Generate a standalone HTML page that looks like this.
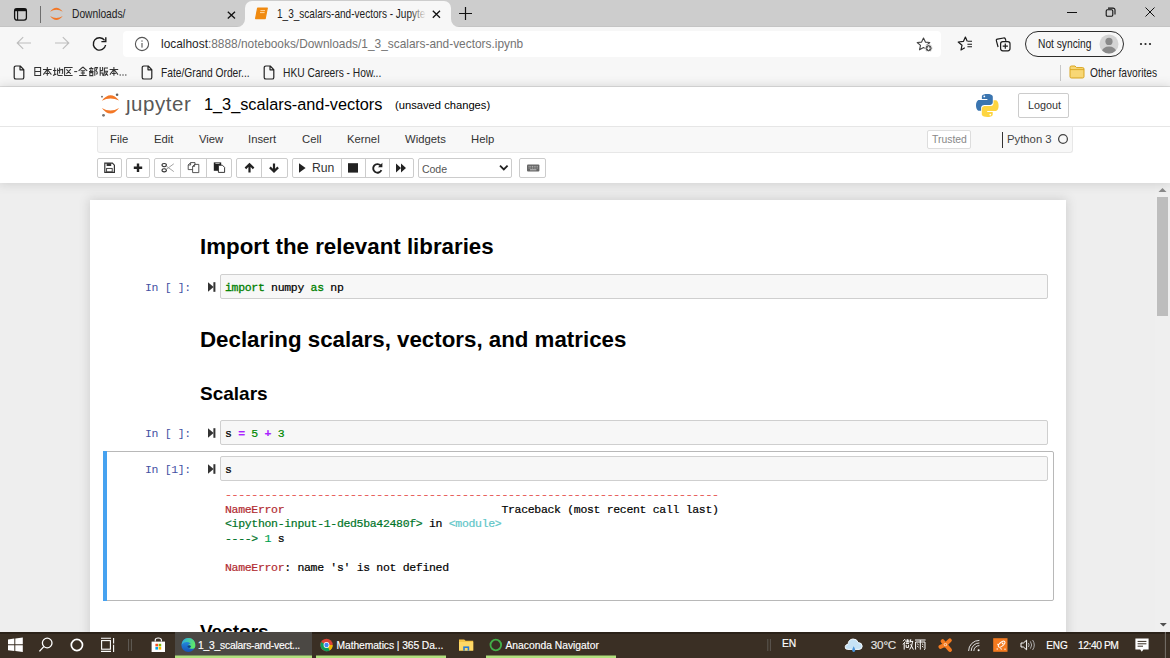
<!DOCTYPE html>
<html><head><meta charset="utf-8">
<style>
*{box-sizing:border-box;margin:0;padding:0}
html,body{width:1170px;height:658px;overflow:hidden;background:#eeeeee;font-family:"Liberation Sans",sans-serif;position:relative}
.a{position:absolute}
svg.a{overflow:visible}
.mono{font-family:"Liberation Mono",monospace}
.seg{font-size:12.4px;color:#1b1b1b;white-space:nowrap;transform:scaleX(0.825);transform-origin:0 0;line-height:14px}
.menu{top:132px;font-size:11.3px;color:#333;line-height:14px}
.btn{top:158px;height:20px;background:#fff;border:1px solid #ccc;border-radius:2px}
.dv{top:159px;width:1px;height:18px;background:#ccc}
h1.a{font-size:22.3px;font-weight:bold;color:#000;line-height:26px}
h2.a{font-size:19px;font-weight:bold;color:#000;line-height:22px}
.prompt{font-size:11.5px;letter-spacing:-0.35px;color:#4351a3;white-space:pre;line-height:14px}
.inbox{left:220px;width:828px;height:25px;background:#f7f7f7;border:1px solid #cfcfcf;border-radius:2px}
.code{-webkit-text-stroke:0.2px currentColor;font-size:11.5px;letter-spacing:-0.32px;color:#000;white-space:pre;line-height:14px}
.kw{color:#008000;-webkit-text-stroke:0.3px currentColor}
.op{color:#aa22ff;font-weight:bold}
.num{color:#008800}
.out{-webkit-text-stroke:0.2px currentColor;font-size:11.5px;letter-spacing:-0.32px;white-space:pre;line-height:14.5px;color:#000}
.r1{color:#e75c58}.r2{color:#b22b31}.g2{color:#007427}.g1{color:#00a250}.cy{color:#60c6c8}
.tb{-webkit-text-stroke:0.15px currentColor;font-size:10.3px;color:#fff;white-space:nowrap;line-height:12px}
.cjk path{fill:none;stroke-linecap:butt}
</style></head><body>

<!-- ============ TAB STRIP ============ -->
<div class="a" style="left:0;top:0;width:1170px;height:27px;background:#cdcdcd"></div>
<div class="a" style="left:0;top:27px;width:1170px;height:60px;background:#f7f7f7"></div>
<div class="a" style="left:0;top:26px;width:1170px;height:1px;background:#c4c4c4"></div>
<div class="a" style="left:245px;top:1px;width:206px;height:27px;background:#f7f7f7;border-radius:7px 7px 0 0"></div>
<svg class="a" style="left:237px;top:19px" width="8" height="8"><path d="M8 0 V8 H0 A8 8 0 0 0 8 0Z" fill="#f7f7f7"/></svg>
<svg class="a" style="left:451px;top:19px" width="8" height="8"><path d="M0 0 V8 H8 A8 8 0 0 1 0 0Z" fill="#f7f7f7"/></svg>
<svg class="a" style="left:13px;top:7px" width="15" height="15" viewBox="0 0 15 15"><rect x="1.6" y="1.6" width="11.8" height="11.6" rx="2.4" fill="none" stroke="#111" stroke-width="1.3"/><rect x="1.6" y="1.6" width="11.8" height="2.6" fill="#111"/><line x1="4.6" y1="3" x2="4.6" y2="13" stroke="#111" stroke-width="1.1"/></svg>
<div class="a" style="left:40px;top:6px;width:1px;height:17px;background:#6e6e6e"></div>
<svg class="a" style="left:49px;top:6px" width="15" height="16" viewBox="0 0 15 16"><path d="M1 5.8 Q7.3 -2.2 13.8 5.8 Q7.3 1.6 1 5.8Z" fill="#f37726"/><path d="M1 10 Q7.3 18 13.8 10 Q7.3 14.2 1 10Z" fill="#f37726"/></svg>
<div class="a seg" style="left:72px;top:7px;color:#222">Downloads/</div>
<svg class="a" style="left:227px;top:11px" width="9" height="8"><path d="M0.8 0.8 L8 7.4 M8 0.8 L0.8 7.4" stroke="#111" stroke-width="1.3"/></svg>
<svg class="a" style="left:254px;top:7px" width="15" height="13" viewBox="0 0 15 13"><path d="M3.6 1 H13.3 L11.2 11.6 H1.6Z" fill="#f08a10" stroke="#f08a10" stroke-width="1.2" stroke-linejoin="round"/><path d="M6.4 3.6 H11 M6 5.6 H10.6" stroke="#ffd7a0" stroke-width="1"/></svg>
<div class="a" style="left:277px;top:7px;width:160px;height:16px;overflow:hidden"><div class="seg" style="position:absolute;left:0;top:0;transform:scaleX(0.81)">1_3_scalars-and-vectors - Jupyter</div><div style="position:absolute;left:133px;top:0;width:27px;height:16px;background:linear-gradient(to right,rgba(247,247,247,0),#f7f7f7 60%)"></div></div>
<svg class="a" style="left:432px;top:10px" width="9" height="9"><path d="M0.8 0.8 L8 7.8 M8 0.8 L0.8 7.8" stroke="#111" stroke-width="1.3"/></svg>
<svg class="a" style="left:459px;top:7px" width="13" height="13"><path d="M6.5 0 V13 M0 6.5 H13" stroke="#111" stroke-width="1.2"/></svg>
<div class="a" style="left:1067px;top:12px;width:10px;height:1px;background:#111"></div>
<svg class="a" style="left:1105px;top:7px" width="11" height="10" viewBox="0 0 11 10"><rect x="1.2" y="2.7" width="6.6" height="6.6" rx="1.2" fill="none" stroke="#111" stroke-width="1.1"/><path d="M3 1.1 H8 A2 2 0 0 1 10 3.1 V7.6" fill="none" stroke="#111" stroke-width="1.1"/></svg>
<svg class="a" style="left:1145px;top:7px" width="10" height="10"><path d="M0.5 0.5 L9.5 9.5 M9.5 0.5 L0.5 9.5" stroke="#111" stroke-width="1"/></svg>

<!-- ============ TOOLBAR ============ -->
<svg class="a" style="left:16px;top:36px" width="16" height="14" viewBox="0 0 16 14"><path d="M15 7 H1.5 M7.2 1.2 L1.2 7 L7.2 12.8" fill="none" stroke="#bdbdbd" stroke-width="1.1"/></svg>
<svg class="a" style="left:54px;top:36px" width="16" height="14" viewBox="0 0 16 14"><path d="M1 7 H14.5 M8.8 1.2 L14.8 7 L8.8 12.8" fill="none" stroke="#bdbdbd" stroke-width="1.1"/></svg>
<svg class="a" style="left:91px;top:36px" width="17" height="16" viewBox="0 0 17 16"><path d="M13.6 4.4 A6.2 6.2 0 1 0 14.6 9" fill="none" stroke="#1b1b1b" stroke-width="1.4"/><path d="M14.8 1.2 V5.6 H10.4" fill="none" stroke="#1b1b1b" stroke-width="1.4"/></svg>
<div class="a" style="left:123px;top:31px;width:818px;height:26px;background:#fff;border-radius:4px"></div>
<svg class="a" style="left:134px;top:36px" width="16" height="16" viewBox="0 0 16 16"><circle cx="8" cy="8" r="6.6" fill="none" stroke="#555" stroke-width="1.1"/><rect x="7.45" y="7" width="1.1" height="4.6" fill="#555"/><rect x="7.45" y="4.4" width="1.1" height="1.3" fill="#555"/></svg>
<div class="a" style="left:161px;top:37px;font-size:11.9px;color:#1f1f1f;white-space:nowrap;line-height:14px">localhost<span style="color:#737373">:8888/notebooks/Downloads/1_3_scalars-and-vectors.ipynb</span></div>
<svg class="a" style="left:916px;top:37px" width="17" height="15" viewBox="0 0 17 15"><path d="M7.5 1 L9.4 5.1 L13.8 5.5 L10.5 8.4 L11.5 12.8 L7.5 10.5 L3.5 12.8 L4.5 8.4 L1.2 5.5 L5.6 5.1Z" fill="none" stroke="#444" stroke-width="1.1" stroke-linejoin="round"/><circle cx="12.6" cy="11.2" r="3.6" fill="#555" stroke="#fff" stroke-width="0.9"/><path d="M12.6 9.4 V13 M10.8 11.2 H14.4" stroke="#fff" stroke-width="1"/></svg>
<svg class="a" style="left:957px;top:36px" width="17" height="15" viewBox="0 0 17 15"><path d="M10.2 5.3 L8.4 1.1 L6.5 5.3 L1.2 6 L5 9.2 L4 14 L7.8 11.8" fill="none" stroke="#1b1b1b" stroke-width="1.2" stroke-linejoin="round"/><path d="M10.4 5.3 H15 M10.4 8.3 H15 M10.4 10.8 H15" stroke="#1b1b1b" stroke-width="1.1"/></svg>
<svg class="a" style="left:995px;top:36px" width="17" height="16" viewBox="0 0 17 16"><path d="M3.1 11 L1.4 4.8 Q1 3.4 2.4 3.1 L8.6 2 Q9.9 1.8 10.4 3 L10.9 4.8" fill="none" stroke="#1b1b1b" stroke-width="1.2"/><rect x="5.6" y="5.6" width="9.4" height="9.2" rx="2.2" fill="#f7f7f7" stroke="#1b1b1b" stroke-width="1.2"/><path d="M10.3 7.6 V12.8 M7.7 10.2 H12.9" stroke="#1b1b1b" stroke-width="1.2"/></svg>
<div class="a" style="left:1025px;top:31px;width:99px;height:26px;border:1.2px solid #2b2b2b;border-radius:13px"></div>
<div class="a seg" style="left:1038px;top:37px;color:#222">Not syncing</div>
<svg class="a" style="left:1099px;top:34px" width="20" height="20" viewBox="0 0 20 20"><circle cx="10" cy="10" r="9.5" fill="#d4d4d4"/><clipPath id="cp1"><circle cx="10" cy="10" r="9.5"/></clipPath><g clip-path="url(#cp1)" fill="#8a8a8a"><circle cx="10" cy="7.4" r="3.6"/><ellipse cx="10" cy="17.6" rx="7" ry="5"/></g></svg>
<svg class="a" style="left:1139px;top:42px" width="13" height="4"><circle cx="2" cy="2" r="1.1" fill="#222"/><circle cx="6.5" cy="2" r="1.1" fill="#222"/><circle cx="11" cy="2" r="1.1" fill="#222"/></svg>

<!-- ============ BOOKMARKS ============ -->
<div class="a" style="left:0;top:86px;width:1170px;height:1px;background:#dedede"></div>
<svg class="a" style="left:13px;top:65px" width="12" height="15" viewBox="0 0 12 15"><path d="M1.2 2.6 A1.6 1.6 0 0 1 2.8 1 H7.2 L10.8 4.6 V12.4 A1.6 1.6 0 0 1 9.2 14 H2.8 A1.6 1.6 0 0 1 1.2 12.4Z M7 1 V4.8 H10.8" fill="none" stroke="#222" stroke-width="1.2" stroke-linejoin="round"/></svg>
<svg class="a cjk" style="left:34px;top:67px" width="95" height="9" viewBox="0 0 95 9"><g stroke="#333" stroke-width="1.05">
<path d="M0.8 0.5 H6.6 V8.5 H0.8Z M0.8 4.5 H6.6"/>
<path transform="translate(9 0)" d="M0 2.4 H8.6 M4.3 0 V8.8 M4.3 2.4 L0.3 7.6 M4.3 2.4 L8.4 7.6 M2.4 6.4 H6.2"/>
<path transform="translate(19 0)" d="M0 3.4 H3.4 M1.7 0.6 V7.6 L0 8.4 L3.4 7 M4.2 3.6 L9.6 2.4 V6.2 L8.8 6.6 M6.6 0.4 V6.6 M4.6 1.4 V7.6 Q4.6 8.5 5.5 8.5 H9.6"/>
<path transform="translate(30 0)" d="M8.6 0.5 H0.6 V8.5 H8.6 M2.4 2.4 L6.8 6.8 M6.8 2.2 L2.4 6.8"/>
<path transform="translate(40 0)" d="M0.2 4.6 H3.2"/>
<path transform="translate(44.6 0)" d="M4.3 0 L0 3.8 M4.3 0 L8.6 3.8 M2 3.8 H6.6 M2.2 6 H6.4 M0.6 8.5 H8 M4.3 3.8 V8.5"/>
<path transform="translate(55 0)" d="M2.2 0 V1.2 M0.2 1.6 H4.4 M1.2 2.6 L1.8 4 M3.4 2.6 L2.8 4 M0 4.4 H4.6 M0.8 5.6 H3.8 V8.6 H0.8Z M5.8 0.4 V8.8 M5.8 0.6 H8.4 L7 3.6 Q8.8 5 8.2 6.6 Q7.8 7.2 7 7"/>
<path transform="translate(65 0)" d="M1.2 0 V8.8 M1.2 3.6 H3.8 M3.6 0 V3.6 M1.2 6 H3.8 V8.8 M5 1 H9 M5.4 1 V5 Q5.4 7.6 4.4 8.8 M5.4 4.2 H8.6 Q8 7 5.6 8.8 M6.4 5.4 L9 8.6"/>
<path transform="translate(75.6 0)" d="M0 2.4 H8.6 M4.3 0 V8.8 M4.3 2.4 L0.3 7.6 M4.3 2.4 L8.4 7.6 M2.4 6.4 H6.2"/>
</g><g fill="#333"><rect x="85.6" y="7.4" width="1.2" height="1.2"/><rect x="88.4" y="7.4" width="1.2" height="1.2"/><rect x="91.2" y="7.4" width="1.2" height="1.2"/></g></svg>
<svg class="a" style="left:141px;top:65px" width="12" height="15" viewBox="0 0 12 15"><path d="M1.2 2.6 A1.6 1.6 0 0 1 2.8 1 H7.2 L10.8 4.6 V12.4 A1.6 1.6 0 0 1 9.2 14 H2.8 A1.6 1.6 0 0 1 1.2 12.4Z M7 1 V4.8 H10.8" fill="none" stroke="#222" stroke-width="1.2" stroke-linejoin="round"/></svg>
<div class="a seg" style="left:161px;top:66px;color:#222">Fate/Grand Order...</div>
<svg class="a" style="left:263px;top:65px" width="12" height="15" viewBox="0 0 12 15"><path d="M1.2 2.6 A1.6 1.6 0 0 1 2.8 1 H7.2 L10.8 4.6 V12.4 A1.6 1.6 0 0 1 9.2 14 H2.8 A1.6 1.6 0 0 1 1.2 12.4Z M7 1 V4.8 H10.8" fill="none" stroke="#222" stroke-width="1.2" stroke-linejoin="round"/></svg>
<div class="a seg" style="left:283px;top:66px;color:#222">HKU Careers - How...</div>
<div class="a" style="left:1060px;top:65px;width:1px;height:16px;background:#c8c8c8"></div>
<svg class="a" style="left:1069px;top:65px" width="16" height="14" viewBox="0 0 16 14"><path d="M1 2.4 A1.4 1.4 0 0 1 2.4 1 H6 L7.6 2.6 H13.6 A1.4 1.4 0 0 1 15 4 V11.6 A1.4 1.4 0 0 1 13.6 13 H2.4 A1.4 1.4 0 0 1 1 11.6Z" fill="#f8d775" stroke="#d9a520" stroke-width="1"/><path d="M1 4.6 H15" stroke="#d9a520" stroke-width="0.9"/></svg>
<div class="a seg" style="left:1090px;top:66px;color:#222">Other favorites</div>

<!-- ============ NOTEBOOK ============ -->
<div class="a" style="left:1155px;top:183px;width:15px;height:449px;background:#efefef"></div>
<svg class="a" style="left:1158px;top:187px" width="9" height="6"><path d="M0.5 5 L4.5 1 L8.5 5Z" fill="#8a8a8a"/></svg>
<div class="a" style="left:1157px;top:197px;width:11px;height:119px;background:#bdbdbd"></div>
<svg class="a" style="left:1158.5px;top:621.5px" width="9" height="6"><path d="M0.8 1 L4.3 4.6 L7.8 1Z" fill="#505050"/></svg>
<div class="a" style="left:90px;top:200px;width:976px;height:460px;background:#fff;box-shadow:0 0 10px 1px rgba(87,87,87,0.2)"></div>

<!-- ============ JUPYTER HEADER ============ -->
<div class="a" style="left:0;top:87px;width:1170px;height:96px;background:#fff;box-shadow:0 0 10px 1px rgba(87,87,87,0.2)"></div>
<svg class="a" style="left:100px;top:93px" width="22" height="25" viewBox="0 0 22 25"><path d="M1.8 7.8 Q10.4 -3.1 19.1 7.6 Q10.4 3.1 1.8 7.8Z" fill="#f37726"/><path d="M1.8 15 Q10.4 26.2 19.1 15 Q10.4 20.2 1.8 15Z" fill="#f37726"/><circle cx="17.1" cy="1.8" r="1.3" fill="#616262"/><circle cx="2" cy="3.7" r="0.9" fill="#616262"/><circle cx="3.5" cy="22.3" r="1.4" fill="#757575"/></svg>
<div class="a" style="left:126px;top:91.5px;font-size:20.5px;color:#585858;line-height:24px;letter-spacing:0.55px">ȷupyter</div>
<div class="a" style="left:204px;top:95px;font-size:16.3px;color:#000;line-height:19px">1_3_scalars-and-vectors</div>
<div class="a" style="left:395px;top:98.3px;font-size:11.2px;color:#000;line-height:14px">(unsaved changes)</div>
<svg class="a" style="left:975px;top:93px" width="25" height="25" viewBox="0 0 25 25"><path d="M12.2 1 C6.5 1 6.9 3.5 6.9 3.5 V6.1 H12.4 V6.9 H4.7 C4.7 6.9 1 6.5 1 12.3 C1 18 4.2 17.8 4.2 17.8 H6.1 V15.1 C6.1 15.1 6 11.9 9.3 11.9 H14.7 C14.7 11.9 17.8 12 17.8 8.9 V3.9 C17.8 3.9 18.3 1 12.2 1Z" fill="#3a75b0"/><path d="M12.4 24 C18.1 24 17.7 21.5 17.7 21.5 V18.9 H12.2 V18.1 H19.9 C19.9 18.1 23.6 18.5 23.6 12.7 C23.6 7 20.4 7.2 20.4 7.2 H18.5 V9.9 C18.5 9.9 18.6 13.1 15.3 13.1 H9.9 C9.9 13.1 6.8 13 6.8 16.1 V21.1 C6.8 21.1 6.3 24 12.4 24Z" fill="#fdd541"/><circle cx="9.3" cy="3.4" r="0.9" fill="#fff"/><circle cx="15.3" cy="21.6" r="0.9" fill="#fff"/></svg>
<div class="a" style="left:1018px;top:93px;width:51px;height:25px;border:1px solid #ccc;border-radius:2px;background:#fff"></div>
<div class="a" style="left:1028px;top:98px;font-size:10.8px;color:#333;line-height:14px">Logout</div>

<div class="a" style="left:0;top:126px;width:1170px;height:1px;background:#e6e6e6"></div>
<div class="a" style="left:97px;top:127px;width:976px;height:26px;background:#f8f8f8;border:1px solid #e7e7e7;border-top:none;border-radius:0 0 3px 3px"></div>
<div class="a menu" style="left:110px">File</div>
<div class="a menu" style="left:154px">Edit</div>
<div class="a menu" style="left:199px">View</div>
<div class="a menu" style="left:248px">Insert</div>
<div class="a menu" style="left:302px">Cell</div>
<div class="a menu" style="left:347px">Kernel</div>
<div class="a menu" style="left:405px">Widgets</div>
<div class="a menu" style="left:471px">Help</div>
<div class="a" style="left:927px;top:130px;width:44px;height:19px;border:1px solid #ddd;background:#fff;border-radius:2px"></div>
<div class="a" style="left:932px;top:133px;font-size:10.4px;color:#888;line-height:14px">Trusted</div>
<div class="a" style="left:1002px;top:132px;width:1px;height:15.5px;background:#333"></div>
<div class="a" style="left:1007px;top:132px;font-size:11.3px;color:#444;line-height:14px">Python 3</div>
<svg class="a" style="left:1057px;top:133px" width="12" height="12"><circle cx="6" cy="6" r="4.4" fill="none" stroke="#444" stroke-width="1.25"/></svg>

<div class="a btn" style="left:97px;width:25px"></div>
<div class="a btn" style="left:126px;width:24px"></div>
<div class="a btn" style="left:154px;width:78px"></div>
<div class="a dv" style="left:180px"></div><div class="a dv" style="left:206px"></div>
<div class="a btn" style="left:236px;width:52px"></div>
<div class="a dv" style="left:261px"></div>
<div class="a btn" style="left:292px;width:122px"></div>
<div class="a dv" style="left:341px"></div><div class="a dv" style="left:365px"></div><div class="a dv" style="left:389px"></div>
<div class="a btn" style="left:418px;width:94px"></div>
<div class="a btn" style="left:519px;width:27px"></div>
<svg class="a" style="left:0;top:0" width="1170" height="658">
 <!-- save -->
 <path d="M104.8 163.2 H112.4 L114.4 165.2 V172.4 H104.8Z" fill="none" stroke="#333" stroke-width="1.2"/>
 <rect x="106.6" y="163.2" width="4.6" height="2.8" fill="#333"/>
 <rect x="106.6" y="168.4" width="5.6" height="3.4" fill="#fff" stroke="#333" stroke-width="0.9"/>
 <!-- plus -->
 <path d="M138 163.6 V172 M133.8 167.8 H142.2" stroke="#222" stroke-width="2.4"/>
 <!-- scissors -->
 <ellipse cx="164.2" cy="165.1" rx="2.2" ry="1.6" fill="none" stroke="#333" stroke-width="1.1"/>
 <ellipse cx="164.2" cy="170.3" rx="2.2" ry="1.6" fill="none" stroke="#333" stroke-width="1.1"/>
 <path d="M166.2 166 L173.8 171.6 M166.2 169.4 L173.8 163.8" stroke="#999" stroke-width="0.9"/>
 <!-- copy -->
 <path d="M190.6 162.6 H195 V169.6 H188.2 V165Z M190.6 162.6 V165 H188.2" fill="#fff" stroke="#444" stroke-width="0.9"/>
 <path d="M194.6 164.4 H198.8 V172.6 H192.6 V166.4Z M194.6 164.4 V166.4 H192.6" fill="#fff" stroke="#444" stroke-width="0.9"/>
 <!-- paste -->
 <rect x="213.8" y="162.4" width="7.4" height="8.4" fill="#222"/>
 <rect x="215.4" y="163" width="4.2" height="1" fill="#aaa"/>
 <path d="M218.4 165.2 H222.4 L224.6 167.4 V172.4 H218.4Z" fill="#fff" stroke="#222" stroke-width="0.9"/>
 <!-- up/down -->
 <path d="M249.5 172.4 V164.6 M245.4 168.4 L249.5 164.3 L253.6 168.4" fill="none" stroke="#222" stroke-width="2.2"/>
 <path d="M274 163.4 V171.2 M269.9 167.4 L274 171.5 L278.1 167.4" fill="none" stroke="#222" stroke-width="2.2"/>
 <!-- run triangle -->
 <path d="M299 163.2 L305.6 168 L299 172.8Z" fill="#222"/>
 <!-- stop -->
 <rect x="348" y="163.2" width="10" height="9.4" fill="#222"/>
 <!-- restart -->
 <path d="M380.6 165.4 A4.3 4.3 0 1 0 381.4 170.2" fill="none" stroke="#222" stroke-width="1.9"/>
 <path d="M382.4 162.8 V167.2 H378Z" fill="#222"/>
 <!-- fast forward -->
 <path d="M396 163.4 L401 168 L396 172.6Z M401 163.4 L406 168 L401 172.6Z" fill="#222"/>
 <!-- chevron -->
 <path d="M500 165.6 L503.8 169.4 L507.6 165.6" fill="none" stroke="#222" stroke-width="1.8"/>
 <!-- keyboard -->
 <rect x="527" y="164.4" width="12.4" height="7" rx="1" fill="#666"/>
 <path d="M528.6 166.4 H537.8 M528.6 168 H537.8" stroke="#ddd" stroke-width="0.7" stroke-dasharray="1 0.7"/>
 <path d="M530 169.8 H536.4" stroke="#ddd" stroke-width="0.8"/>
</svg>
<div class="a" style="left:312px;top:160.5px;font-size:12.2px;color:#333;line-height:14px">Run</div>
<div class="a" style="left:422px;top:162px;font-size:10.6px;color:#555;line-height:14px;letter-spacing:-0.1px">Code</div>

<h1 class="a" style="left:200px;top:234px">Import the relevant libraries</h1>
<div class="a prompt mono" style="left:145px;top:281.3px">In [ ]:</div>
<svg class="a" style="left:208px;top:282px" width="8" height="10"><path d="M0 0.2 L5.6 5 L0 9.8Z" fill="#333"/><rect x="5.4" y="0.2" width="2" height="9.6" fill="#333"/></svg>
<div class="a inbox" style="top:274px"></div>
<div class="a code mono" style="left:225px;top:281px"><span class="kw">import</span> numpy <span class="kw">as</span> np</div>

<h1 class="a" style="left:200px;top:327px">Declaring scalars, vectors, and matrices</h1>
<h2 class="a" style="left:200px;top:383px">Scalars</h2>
<div class="a prompt mono" style="left:145px;top:427.3px">In [ ]:</div>
<svg class="a" style="left:208px;top:428px" width="8" height="10"><path d="M0 0.2 L5.6 5 L0 9.8Z" fill="#333"/><rect x="5.4" y="0.2" width="2" height="9.6" fill="#333"/></svg>
<div class="a inbox" style="top:420px"></div>
<div class="a code mono" style="left:225px;top:427px">s <span class="op">=</span> <span class="num">5</span> <span class="op">+</span> <span class="num">3</span></div>

<div class="a" style="left:103px;top:451px;width:951px;height:150px;border:1px solid #b8b8b8;border-radius:2px"></div>
<div class="a" style="left:103px;top:451px;width:4.4px;height:150px;background:#46a2f0"></div>
<div class="a prompt mono" style="left:145px;top:463.3px">In [1]:</div>
<svg class="a" style="left:208px;top:464px" width="8" height="10"><path d="M0 0.2 L5.6 5 L0 9.8Z" fill="#333"/><rect x="5.4" y="0.2" width="2" height="9.6" fill="#333"/></svg>
<div class="a inbox" style="top:456px"></div>
<div class="a code mono" style="left:225px;top:463px">s</div>
<div class="a out mono" style="left:225px;top:488.4px"><span class="r1">---------------------------------------------------------------------------</span>
<span class="r2">NameError</span>                                 Traceback (most recent call last)
<span class="g2">&lt;ipython-input-1-ded5ba42480f&gt;</span> in <span class="cy">&lt;module&gt;</span>
<span class="g2">----&gt; </span><span class="g1">1</span> s

<span class="r2">NameError</span>: name 's' is not defined</div>

<h2 class="a" style="left:200px;top:621px">Vectors</h2>

<!-- ============ TASKBAR ============ -->
<div class="a" style="left:0;top:632px;width:1170px;height:26px;background:#3a2f24;border-top:2px solid #2b2219"></div>
<div class="a" style="left:175px;top:632px;width:137px;height:26px;background:#4b4844"></div>
<svg class="a" style="left:0;top:0" width="1170" height="658">
 <defs>
  <linearGradient id="edg" x1="0" y1="0" x2="1" y2="0.3"><stop offset="0" stop-color="#2aa8e8"/><stop offset="1" stop-color="#5ee86a"/></linearGradient><linearGradient id="edb" x1="0" y1="0" x2="0" y2="1"><stop offset="0" stop-color="#2b9be8"/><stop offset="1" stop-color="#1553b8"/></linearGradient>
 </defs>
 <!-- underlines -->
 <rect x="175" y="655.5" width="137" height="2.5" fill="#b0e07e"/>
 <rect x="316" y="655.5" width="130" height="2.5" fill="#b0e07e"/>
 <rect x="486" y="655.5" width="130" height="2.5" fill="#b0e07e"/>
 <!-- windows logo -->
 <g fill="#fff">
  <path d="M8 639.4 L14.3 638.6 V644.3 H8Z"/><path d="M15.3 638.5 L22.8 637.6 V644.3 H15.3Z"/>
  <path d="M8 645.3 H14.3 V651 L8 650.2Z"/><path d="M15.3 645.3 H22.8 V652 L15.3 651.1Z"/>
 </g>
 <!-- search -->
 <circle cx="47.2" cy="643" r="4.8" fill="none" stroke="#fff" stroke-width="1.3"/>
 <path d="M43.8 646.6 L39.4 651.4" stroke="#fff" stroke-width="1.4"/>
 <!-- cortana -->
 <circle cx="76.9" cy="645" r="5.6" fill="none" stroke="#fff" stroke-width="1.7"/>
 <!-- task view -->
 <g fill="none" stroke="#fff" stroke-width="1.1">
  <rect x="101.6" y="640.6" width="8.8" height="8.6"/>
  <path d="M101 638.3 H111 M101 651.4 H111 M113.6 638 V643.4 M113.6 644.8 V652"/>
 </g>
 <path d="M128.6 639 V651 M131.4 639 V651" stroke="#625d58" stroke-width="1"/>
 <!-- store -->
 <path d="M151.6 641.6 H165 V652 H151.6Z" fill="#fff"/>
 <path d="M155.2 641.6 V640 Q155.2 638 158.3 638 Q161.4 638 161.4 640 V641.6" fill="none" stroke="#fff" stroke-width="1.1"/>
 <rect x="155.4" y="643.8" width="2.6" height="2.6" fill="#f25022"/><rect x="158.6" y="643.8" width="2.6" height="2.6" fill="#7fba00"/>
 <rect x="155.4" y="647" width="2.6" height="2.6" fill="#00a4ef"/><rect x="158.6" y="647" width="2.6" height="2.6" fill="#ffb900"/>
 <!-- edge -->
 <circle cx="188.4" cy="645" r="7" fill="url(#edb)"/>
 <path d="M188.4 638 A7 7 0 0 1 195.3 646.2 Q194.8 649 191.4 648.8 Q188.2 648.4 188 646 Q188.2 643.8 190.8 643.6 Q186 640.2 181.6 644.6 Q182.8 638.4 188.4 638Z" fill="url(#edg)"/>
 <ellipse cx="189.2" cy="646.6" rx="1.6" ry="1.3" fill="#0b3f86"/>
 <!-- chrome -->
 <circle cx="326.5" cy="645" r="6.2" fill="#db4437"/>
 <path d="M326.5 645 L321.1 648.1 A6.2 6.2 0 0 1 321.1 641.9Z" fill="#0f9d58"/>
 <path d="M326.5 645 L332.7 645 A6.2 6.2 0 0 1 326.5 651.2 L321.1 648.1Z" fill="#0f9d58"/>
 <path d="M326.5 645 L332.7 645 A6.2 6.2 0 0 1 329.6 650.4Z" fill="#f4b400"/>
 <path d="M326.5 645 L329.6 650.4 A6.2 6.2 0 0 1 321.1 648.1Z" fill="#0f9d58"/>
 <circle cx="326.5" cy="645" r="2.9" fill="#fff"/><circle cx="326.5" cy="645" r="2.2" fill="#4285f4"/>
 <!-- folder -->
 <path d="M459 639.4 H464.2 L465.6 640.8 H473.2 V650.6 H459Z" fill="#f6c445"/>
 <path d="M459 642 H473.2 V650.6 H459Z" fill="#ffd866"/>
 <rect x="463.2" y="646.4" width="6" height="4.2" fill="#2b7cd3"/>
 <rect x="464.8" y="648" width="2.8" height="2.6" fill="#ffd866"/>
 <!-- anaconda -->
 <circle cx="495.8" cy="645" r="5.3" fill="none" stroke="#43b049" stroke-width="1.8"/>
 <!-- tray separators -->
 <path d="M767.8 639 V651 M770.4 639 V651" stroke="#5c5752" stroke-width="1"/>
 <!-- cloud -->
 <path d="M847.6 649.4 Q845 649.4 845.2 646.8 Q845.4 644.4 848 644.4 Q848.4 639.4 853 639 Q857 638.8 858.2 642.6 Q862.2 642.8 862.2 646.2 Q862 649.4 859 649.4Z" fill="#c6e2f6" stroke="#f4faff" stroke-width="1"/>
 <path d="M853.7 646.2 Q852 649.2 852.2 650.4 Q852.6 652 853.7 652 Q854.8 652 855.2 650.4 Q855.4 649.2 853.7 646.2Z" fill="#4b94dc"/>
 <!-- avast -->
 <path d="M940.4 646.8 L945.4 644.6 L949.8 640.4 M945.4 644.6 L950 650 M942.6 641.2 L945.4 644.6" stroke="#f47a20" stroke-width="4" stroke-linecap="round" fill="none"/>
 <circle cx="945.4" cy="644.6" r="1.7" fill="#ffd0a8"/><circle cx="945.4" cy="644.6" r="0.8" fill="#f47a20"/>
 <!-- wifi -->
 <g fill="none" stroke="#ddd" stroke-width="1">
  <path d="M968.6 651 A10.6 10.6 0 0 1 979.4 640.4"/>
  <path d="M971.2 651 A8 8 0 0 1 979.4 643"/>
  <path d="M973.8 651 A5.4 5.4 0 0 1 979.4 645.6"/>
 </g>
 <circle cx="978.6" cy="650.2" r="1" fill="#fff"/>
 <!-- orange square -->
 <rect x="993.2" y="638.2" width="14.3" height="13.6" fill="#f47a20"/>
 <ellipse cx="1001.6" cy="644.2" rx="4" ry="1.9" transform="rotate(-40 1001.6 644.2)" fill="none" stroke="#fff" stroke-width="1"/><circle cx="1002.6" cy="643.4" r="0.9" fill="#fff"/><path d="M997.2 644.2 L999 645 M1000.6 647.8 L1001.4 649.6" stroke="#fff" stroke-width="1"/><rect x="996.6" y="648.4" width="1.2" height="1.2" fill="#fff"/><rect x="1004.4" y="648.6" width="1.2" height="1.2" fill="#fff"/>
 <!-- speaker -->
 <path d="M1021 643 H1023.4 L1026.6 640.2 V649.8 L1023.4 647 H1021Z" fill="none" stroke="#fff" stroke-width="1"/>
 <path d="M1028.4 643 Q1029.8 645 1028.4 647 M1030.4 641.4 Q1033 645 1030.4 648.6 M1032.6 640 Q1036 645 1032.6 650" fill="none" stroke="#bbb" stroke-width="0.9"/>
 <!-- notification -->
 <path d="M1135.4 638.4 H1148.6 V649.6 H1143.4 L1141.8 651.8 L1140.2 649.6 H1135.4Z" fill="#fff"/>
 <path d="M1137.6 641.4 H1146.4 M1137.6 643.8 H1146.4 M1137.6 646.2 H1143" stroke="#3a2f24" stroke-width="1"/>
 <path d="M1165.4 632 V658" stroke="#77726c" stroke-width="1"/>
 <!-- CJK 微雨 -->
 <g class="cjk" stroke="#fff" stroke-width="1">
  <path transform="translate(902.8 639.2)" d="M2 0 L0.3 2 M2.2 2.8 L0.2 5.2 M1.4 4 V10.4 M3.2 0.4 V2.8 H6 V0.4 M4.6 0 V2.8 M3 4.2 H6.2 M3.4 5.6 V8.2 H5.8 V5.6 M8 0 L7.2 3.4 M7.4 2.2 H10.4 M9.8 2.2 Q9.4 7.2 6.8 10.4 M7.8 5 L10.6 10.4"/>
  <path transform="translate(914.8 639.2)" d="M0.2 0.8 H10.8 M5.5 0.8 V10.4 M0.8 2.8 V10.4 M0.8 2.8 H10.2 V9.6 Q10.2 10.4 9.2 10.4 M2.4 4.6 L3.8 5.6 M2.4 7 L3.8 8 M7.2 4.6 L8.6 5.6 M7.2 7 L8.6 8"/>
 </g>
</svg>
<div class="a tb" style="left:198px;top:639.7px;letter-spacing:-0.22px">1_3_scalars-and-vect...</div>
<div class="a tb" style="left:336.5px;top:639.7px;letter-spacing:-0.08px">Mathematics | 365 Da...</div>
<div class="a tb" style="left:505.5px;top:639.7px">Anaconda Navigator</div>
<div class="a tb" style="left:782px;top:637.5px">EN</div>
<div class="a tb" style="left:870.8px;top:639px;font-size:11.7px;color:#e6e6e6;letter-spacing:-0.2px">30°C</div>
<div class="a tb" style="left:1046.2px;top:640px;font-size:10px">ENG</div>
<div class="a tb" style="left:1078px;top:640px;letter-spacing:-0.45px">12:40 PM</div>
</body></html>
